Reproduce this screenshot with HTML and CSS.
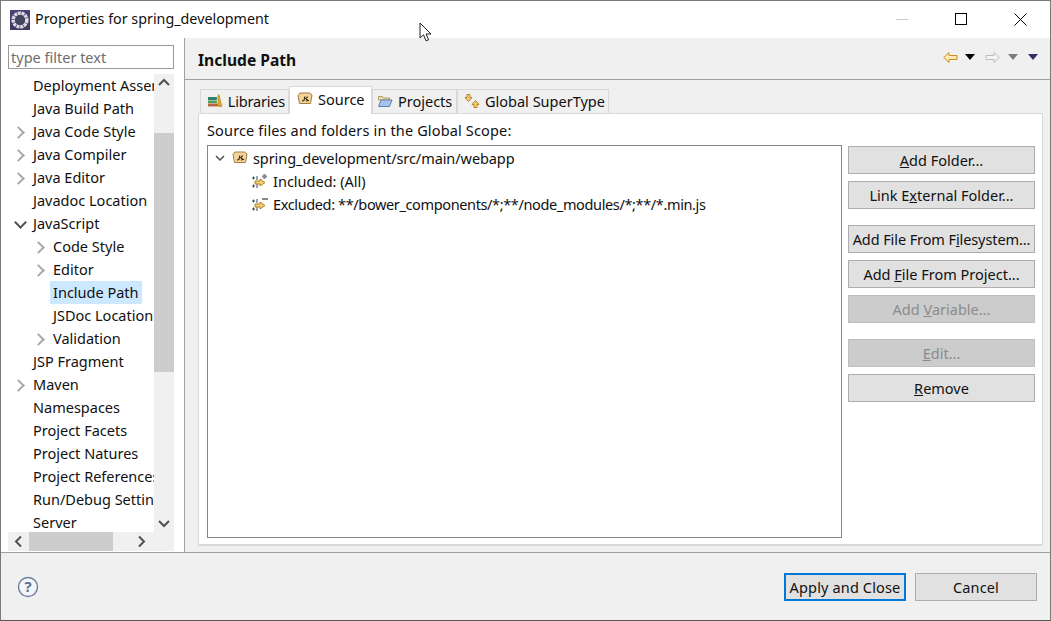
FILE: index.html
```html
<!DOCTYPE html>
<html lang="en">
<head>
<meta charset="utf-8">
<title>Properties for spring_development</title>
<link rel="stylesheet" href="styles.css">
</head>
<body>
<div class="window">
  <header class="titlebar">
    <svg class="appicon" width="20" height="20" viewBox="0 0 20 20">
      <rect width="20" height="20" fill="#4b3f74"/>
      <rect y="10" width="20" height="10" fill="#3f3a60"/>
      <circle cx="10" cy="10" r="6.800" fill="none" stroke="#dcdae4" stroke-width="3.600" stroke-dasharray="3 .7"/>
      <circle cx="10" cy="10" r="5" fill="#45465c"/>
    </svg>
    <span class="title">Properties for spring_development</span>
    <div class="winbtns">
      <span class="wb"><svg width="13" height="13" viewBox="0 0 13 13"><path d="M0 6.500h12" stroke="#ccc"/></svg></span>
      <span class="wb"><svg width="13" height="13" viewBox="0 0 13 13"><rect x=".5" y=".5" width="11" height="11" fill="none" stroke="#000"/></svg></span>
      <span class="wb"><svg width="13" height="13" viewBox="0 0 13 13"><path d="M.5.500l12 12M12.500.500l-12 12" stroke="#000"/></svg></span>
    </div>
  </header>
  <div class="middle">
    <aside class="sidebar">
      <input class="filter" type="text" placeholder="type filter text">
      <div class="treewrap">
        <div class="treepane">
          <div class="nav">
            <div class="row">Deployment Assembly</div>
            <div class="row">Java Build Path</div>
            <div class="row"><i class="tw c"></i>Java Code Style</div>
            <div class="row"><i class="tw c"></i>Java Compiler</div>
            <div class="row"><i class="tw c"></i>Java Editor</div>
            <div class="row">Javadoc Location</div>
            <div class="row"><i class="tw o"></i>JavaScript</div>
            <div class="row sub"><i class="tw c"></i>Code Style</div>
            <div class="row sub"><i class="tw c"></i>Editor</div>
            <div class="row sub"><span class="sel">Include Path</span></div>
            <div class="row sub">JSDoc Location</div>
            <div class="row sub"><i class="tw c"></i>Validation</div>
            <div class="row">JSP Fragment</div>
            <div class="row"><i class="tw c"></i>Maven</div>
            <div class="row">Namespaces</div>
            <div class="row">Project Facets</div>
            <div class="row">Project Natures</div>
            <div class="row">Project References</div>
            <div class="row">Run/Debug Settings</div>
            <div class="row">Server</div>
          </div>
          <div class="vscroll">
            <svg class="arrow" width="20" height="17" viewBox="0 0 20 17"><path d="M5 11l5-5 5 5" fill="none" stroke="#505050" stroke-width="2"/></svg>
            <div class="vtrack"><div class="vthumb"></div></div>
            <svg class="arrow" width="20" height="17" viewBox="0 0 20 17"><path d="M5 6l5 5 5-5" fill="none" stroke="#505050" stroke-width="2"/></svg>
          </div>
        </div>
        <div class="hscroll">
          <svg width="21" height="19" viewBox="0 0 21 19"><path d="M13 4.500l-5 5 5 5" fill="none" stroke="#505050" stroke-width="2"/></svg>
          <div class="hthumb"></div>
          <svg class="hright" width="21" height="19" viewBox="0 0 21 19"><path d="M8 4.500l5 5-5 5" fill="none" stroke="#505050" stroke-width="2"/></svg>
        </div>
      </div>
    </aside>
    <main class="content">
      <div class="pagehead">
        <h1>Include Path</h1>
        <div class="tools">
          <svg width="15" height="13" viewBox="0 0 15 13"><path d="M.7 6.500L6 1.500v3h8v4H6v3z" fill="#fde9b4" stroke="#c98e1e"/></svg>
          <i class="tri k"></i>
          <svg class="fwd" width="15" height="13" viewBox="0 0 15 13"><path d="M14.300 6.500L9 1.500v3H1v4h8v3z" fill="#f4f4f4" stroke="#bdbdbd"/></svg>
          <i class="tri g"></i>
          <i class="tri p"></i>
        </div>
      </div>
      <div class="tabs">
        <div class="tab">
          <svg width="16" height="16" viewBox="0 0 16 16"><rect x="1" y="4" width="9" height="3" fill="#2e7f6c"/><rect x="1" y="7.500" width="9" height="2.500" fill="#4d9b53"/><rect x="1" y="10.500" width="10" height="3" fill="#b5673a"/><path d="M11 3l1-1.500 3 12h-3.500z" fill="#e9a521" stroke="#a87616" stroke-width=".6"/></svg>
          <span class="libname">Libraries</span>
        </div>
        <div class="tab active">
          <svg width="16" height="16" viewBox="0 0 16 16"><path d="M1 4.500L3 2h9.500l2.500 2-1.500 8.500H2.500z" fill="#f2d49a" stroke="#a57c3c"/><path d="M5 10l2-.5.800-4M9 10l2.200-.5-2.500-1.800 2-2" fill="none" stroke="#33260f" stroke-width="1.100"/></svg>
          Source
        </div>
        <div class="tab">
          <svg width="16" height="16" viewBox="0 0 16 16"><path d="M1.500 3.500h4l1 1.500h6v2h-11z" fill="#efe0b5" stroke="#b09a62"/><path d="M1.500 13.500l2.500-6.500h11l-2.500 6.500z" fill="#a9c4ea" stroke="#5d7fb5"/></svg>
          Projects
        </div>
        <div class="tab">
          <svg width="18" height="16" viewBox="0 0 18 16"><path d="M4 1.500h3v3h2l-3.500 4-3.500-4h2z" fill="#f3cf73" stroke="#b5842a"/><path d="M11 14.500h3v-3h2l-3.500-4-3.500 4h2z" fill="#f3cf73" stroke="#b5842a"/></svg>
          Global SuperType
        </div>
      </div>
      <section class="panel">
        <div class="plabel">Source files and folders in the Global Scope:</div>
        <div class="pbody">
          <div class="srctree">
            <div class="srow"><svg class="chev" width="12" height="12" viewBox="0 0 12 12"><path d="M2 4l4 4 4-4" fill="none" stroke="#505050" stroke-width="1.500"/></svg><svg width="16" height="16" viewBox="0 0 16 16"><path d="M1 4.500L3 2h9.500l2.500 2-1.500 8.500H2.500z" fill="#f2d49a" stroke="#a57c3c"/><path d="M5 10l2-.5.800-4M9 10l2.200-.5-2.500-1.800 2-2" fill="none" stroke="#33260f" stroke-width="1.100"/></svg><span class="srcname">spring_development/src/main/webapp</span></div>
            <div class="srow child">
              <svg width="16" height="16" viewBox="0 0 16 16"><path d="M0 5h3M1.500 3.500v3M0 13h3M1.500 11.500v3M5 3v4M5 11v4" fill="none" stroke="#3f4a5a"/><path d="M3 8h5V6l5 3.500-5 3.500v-2H3z" fill="#f3cf73" stroke="#b5842a"/><path d="M10 3.500h5M12.500 1v5" stroke="#8a8a8a" stroke-width="2"/></svg>
              Included: (All)
            </div>
            <div class="srow child">
              <svg width="16" height="16" viewBox="0 0 16 16"><path d="M0 5h3M1.500 3.500v3M0 13h3M1.500 11.500v3M5 3v4M5 11v4" fill="none" stroke="#3f4a5a"/><path d="M3 8h5V6l5 3.500-5 3.500v-2H3z" fill="#f3cf73" stroke="#b5842a"/><path d="M10 3h6" stroke="#8a8a8a" stroke-width="2"/></svg>
              <span class="excl">Excluded: **/bower_components/*;**/node_modules/*;**/*.min.js</span>
            </div>
          </div>
          <div class="actions">
            <button class="btn"><u>A</u>dd Folder...</button>
            <button class="btn">Link E<u>x</u>ternal Folder...</button>
            <button class="btn gap tight">Add File From F<u>i</u>lesystem...</button>
            <button class="btn">Add <u>F</u>ile From Project...</button>
            <button class="btn off">Add <u>V</u>ariable...</button>
            <button class="btn off gap"><u>E</u>dit...</button>
            <button class="btn"><u>R</u>emove</button>
          </div>
        </div>
      </section>
    </main>
  </div>
  <footer class="footer">
    <svg width="22" height="22" viewBox="0 0 22 22"><circle cx="11" cy="11" r="9.500" fill="#f4f5f8" stroke="#6f7f9c" stroke-width="1.400"/><text x="11" y="16" text-anchor="middle" class="qm">?</text></svg>
    <div class="footbtns">
      <button class="fbtn primary">Apply and Close</button>
      <button class="fbtn">Cancel</button>
    </div>
  </footer>
  <svg class="cursor" width="14" height="20" viewBox="0 0 14 20"><path d="M1 1v15l3.500-3.200 2.500 6 2.600-1-2.500-5.800H12z" fill="#fff" stroke="#222"/></svg>
</div>
</body>
</html>
```
FILE: styles.css
```css
* { box-sizing: border-box; }
html, body { margin: 0; padding: 0; }
body {
  width: 1051px;
  height: 621px;
  overflow: hidden;
  font-family: "Noto Sans", "Open Sans", sans-serif;
  font-size: 14.5px;
  color: #111;
  background: #fff;
}
.window {
  position: relative;
  width: 1051px;
  height: 621px;
  border: 1px solid #7a7a7a;
  border-bottom-color: #555;
  display: flex;
  flex-direction: column;
  background: #f0f0f0;
}
.titlebar {
  height: 37px;
  flex: none;
  background: #fff;
  display: flex;
  align-items: center;
  padding-left: 9px;
}
.appicon { margin-right: 5px; }
.title { font-size: 14.3px; color: #111; margin-bottom: 2px; }
.winbtns { margin-left: auto; display: flex; }
.wb {
  width: 59px;
  height: 37px;
  display: flex;
  align-items: center;
  justify-content: center;
}
.middle { flex: 1; display: flex; min-height: 0; }
.sidebar {
  width: 184px;
  flex: none;
  background: #fff;
  border-right: 1px solid #a0a0a0;
  padding: 7px 10px 0 7px;
  display: flex;
  flex-direction: column;
}
.filter {
  width: 166px;
  height: 24px;
  flex: none;
  border: 1px solid #999;
  padding: 0 2px;
  font: inherit;
  color: #111;
  outline: none;
}
.filter::placeholder { color: #6d6d6d; opacity: 1; }
.treewrap {
  margin-top: 5px;
  width: 166px;
  flex: 1;
  display: flex;
  flex-direction: column;
  min-height: 0;
}
.treepane { flex: 1; display: flex; min-height: 0; }
.nav { width: 146px; overflow: hidden; }
.row {
  height: 23px;
  line-height: 23px;
  white-space: nowrap;
  padding-left: 25px;
  position: relative;
}
.row.sub { padding-left: 45px; }
.tw { position: absolute; top: 7px; width: 9px; height: 9px; }
.row .tw { left: 7px; }
.row.sub .tw { left: 27px; }
.tw::before {
  content: "";
  position: absolute;
  width: 7px;
  height: 7px;
  border-right: 2px solid #a9a9a9;
  border-top: 2px solid #a9a9a9;
}
.tw.c::before { transform: rotate(45deg); left: -1px; top: 1px; }
.tw.o::before { transform: rotate(135deg); border-color: #505050; left: 1px; top: -1px; }
.sel {
  display: inline-block;
  height: 23px;
  background: #cce8ff;
  margin-left: -3px;
  padding: 0 3px;
}
.vscroll {
  width: 20px;
  flex: none;
  background: #f0f0f0;
  display: flex;
  flex-direction: column;
}
.arrow { flex: none; display: block; }
.vtrack { flex: 1; }
.vthumb { height: 239px; margin-top: 42px; background: #cdcdcd; }
.hscroll {
  height: 19px;
  flex: none;
  background: #f0f0f0;
  display: flex;
  margin-bottom: 1px;
}
.hthumb { width: 84px; background: #cdcdcd; }
.hright { margin-left: auto; margin-right: 22px; }
.content {
  flex: 1;
  min-width: 0;
  display: flex;
  flex-direction: column;
  padding-left: 13px;
  padding-right: 7px;
}
.pagehead {
  height: 42px;
  margin: 0 -7px 0 -13px;
  padding: 0 12px 0 13px;
  flex: none;
  border-bottom: 1px solid #a0a0a0;
  display: flex;
  align-items: center;
}
h1 { margin: 2px 0 0; font-size: 15.6px; font-weight: 700; color: #111; }
.tools { margin-left: auto; display: flex; align-items: center; margin-top: -3px; }
.tri {
  width: 0;
  height: 0;
  border-left: 5px solid transparent;
  border-right: 5px solid transparent;
  border-top: 6px solid #000;
  margin-left: 7px;
}
.tri.g { border-top-color: #7d7d7d; margin-left: 8px; }
.tri.p { border-top-color: #3a2a6a; margin-left: 10px; }
.fwd { margin-left: 10px; }
.tabs {
  display: flex;
  align-items: flex-end;
  height: 33px;
  flex: none;
  padding-left: 2px;
}
.tab {
  height: 24px;
  display: flex;
  align-items: center;
  gap: 5px;
  padding: 0 3px 2px 5px;
  border: 1px solid #d9d9d9;
  border-bottom: none;
  background: #f0f0f0;
  white-space: nowrap;
}
.tab:nth-child(1) { width: 89px; padding-left: 6px; gap: 5px; }
.libname { letter-spacing: -.2px; }
.tab:nth-child(3) { width: 85px; padding-left: 4px; }
.tab:nth-child(4) { width: 152px; gap: 4px; }
.tab.active {
  width: 83px;
  height: 28px;
  background: #fff;
  padding: 0 3px 4px 7px;
  position: relative;
  margin-bottom: -1px;
}
.panel {
  flex: 1;
  min-height: 0;
  background: #fff;
  border: 1px solid #d9d9d9;
  border-bottom-width: 2px;
  padding: 6px 7px 6px 8px;
  display: flex;
  flex-direction: column;
  margin-bottom: 6px;
}
.plabel { height: 25px; line-height: 20px; flex: none; white-space: nowrap; letter-spacing: .15px; }
.pbody { flex: 1; display: flex; min-height: 0; }
.srctree {
  width: 635px;
  flex: none;
  border: 1px solid #828790;
  padding: 0 0 0 6px;
}
.srow {
  height: 23px;
  display: flex;
  align-items: center;
  white-space: nowrap;
}
.srow svg { flex: none; margin-right: 5px; }
.srow .chev { margin-right: 6px; }
.srcname { letter-spacing: -.08px; }
.excl { letter-spacing: -.37px; }
.child { padding-left: 38px; }
.actions {
  margin-left: 6px;
  width: 187px;
  flex: none;
  display: flex;
  flex-direction: column;
  gap: 7px;
  padding-top: 1px;
}
button { font: inherit; color: #111; }
.btn {
  height: 28px;
  flex: none;
  background: #e1e1e1;
  border: 1px solid #adadad;
  padding: 0;
  white-space: nowrap;
}
.btn.tight { letter-spacing: -.1px; }
.btn.gap { margin-top: 9px; }
.btn.off { background: #cccccc; border-color: #bfbfbf; color: #8b8b8b; }
.footer {
  height: 68px;
  flex: none;
  border-top: 1px solid #a0a0a0;
  display: flex;
  align-items: center;
  padding: 0 13px 0 16px;
}
.qm { font-family: "Noto Sans", sans-serif; font-size: 15px; font-weight: 700; fill: #5f7193; }
.footbtns { margin-left: auto; display: flex; gap: 9px; margin-top: 1px; }
.fbtn {
  width: 122px;
  height: 28px;
  background: #e1e1e1;
  border: 1px solid #adadad;
  padding: 0;
  letter-spacing: .15px;
}
.fbtn.primary { border: 2px solid #0078d7; }
.cursor { position: absolute; left: 418px; top: 21px; }
```
